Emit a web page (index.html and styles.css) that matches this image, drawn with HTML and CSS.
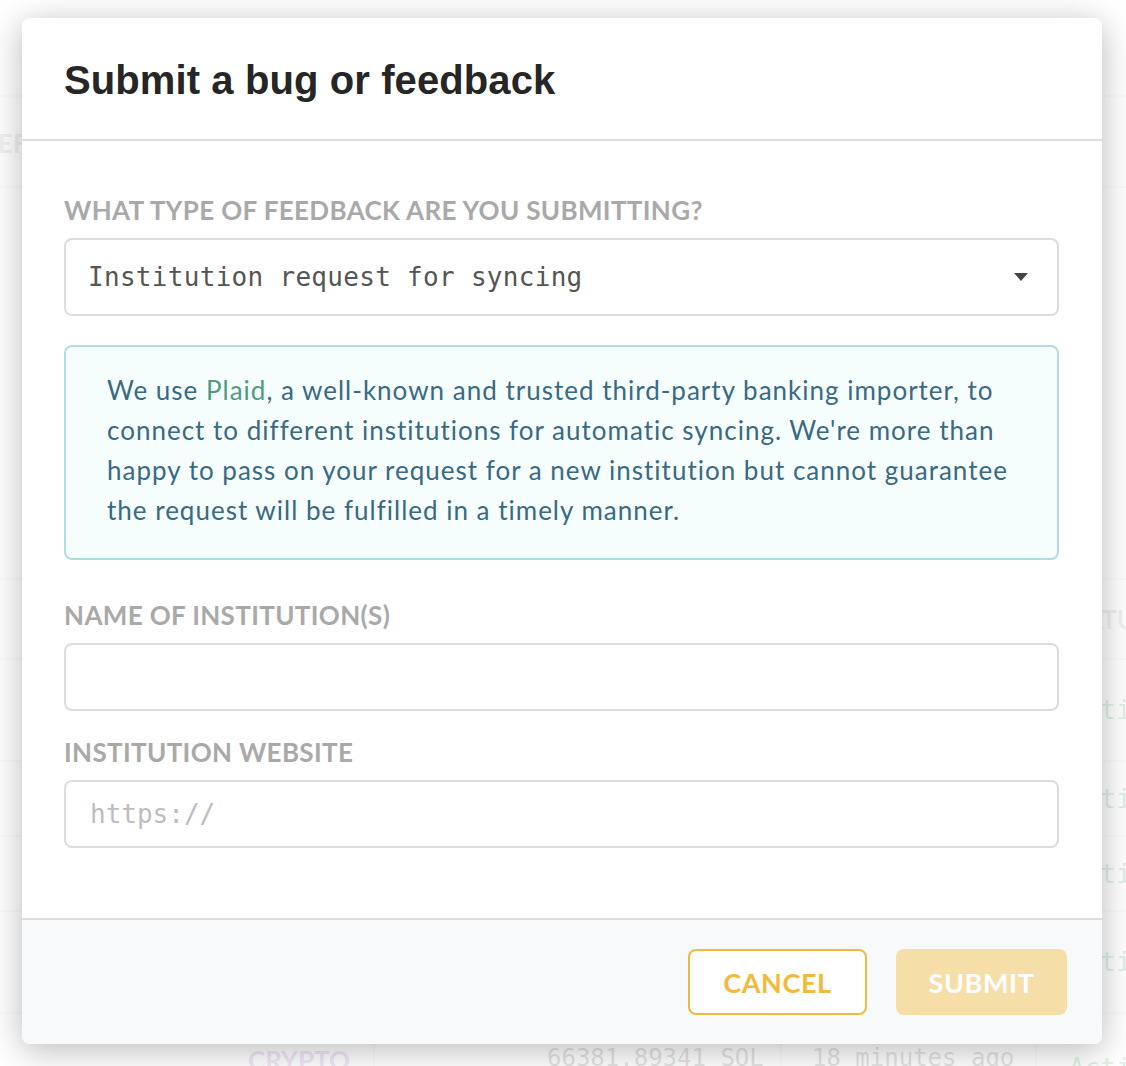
FILE: index.html
```html
<!DOCTYPE html>
<html lang="en">
<head>
<meta charset="utf-8">
<title>Submit a bug or feedback</title>
<link rel="stylesheet" href="styles.css">
</head>
<body>
<div class="page">
  <div class="bg-top">
    <div class="bg-row bg-head"><span class="bg-head-text">REF</span></div>
  </div>
  <div class="bg-table">
    <div class="bg-row bg-thead"><span class="c1"></span><span class="c2"></span><span class="c3"></span><span class="c4 bg-head-text status">STATUS</span></div>
    <div class="bg-row"><span class="c1"></span><span class="c2"></span><span class="c3"></span><span class="c4 active">Active</span></div>
    <div class="bg-row"><span class="c1"></span><span class="c2"></span><span class="c3"></span><span class="c4 active">Active</span></div>
    <div class="bg-row"><span class="c1"></span><span class="c2"></span><span class="c3"></span><span class="c4 active">Active</span></div>
    <div class="bg-row"><span class="c1"></span><span class="c2"></span><span class="c3"></span><span class="c4 active">Active</span></div>
    <div class="bg-row"><span class="c1 crypto">CRYPTO</span><span class="c2 mono">66381.89341 SOL</span><span class="c3 mono">18 minutes ago</span><span class="c4 active">Active</span></div>
  </div>
</div>
<div class="overlay"></div>
<div class="modal">
  <div class="modal-header">
    <h1 class="modal-title">Submit a bug or feedback</h1>
  </div>
  <div class="modal-body">
    <label class="field-label">What type of feedback are you submitting?</label>
    <div class="select">
      <span class="select-value">Institution request for syncing</span>
      <svg class="caret" width="14" height="8" viewBox="0 0 14 8"><path d="M0 0 H14 L7 8 Z" fill="#444"/></svg>
    </div>
    <div class="info">
      We use <span class="plaid">Plaid</span>, a well-known and trusted third-party banking importer, to connect to different institutions for automatic syncing. We're more than happy to pass on your request for a new institution but cannot guarantee the request will be fulfilled in a timely manner.
    </div>
    <label class="field-label label-gap">Name of institution(s)</label>
    <div class="input"></div>
    <label class="field-label label-gap2">Institution website</label>
    <div class="input"><span class="placeholder">https://</span></div>
  </div>
  <div class="modal-footer">
    <button class="btn btn-cancel">Cancel</button>
    <button class="btn btn-submit">Submit</button>
  </div>
</div>
</body>
</html>
```

FILE: styles.css
```css
* { box-sizing: border-box; }
html, body { margin: 0; padding: 0; }
body {
  width: 1126px;
  height: 1066px;
  overflow: hidden;
  background: #fff;
  font-family: "Lato", "Noto Sans", sans-serif;
  position: relative;
}
.page {
  display: flex;
  flex-direction: column;
}
.bg-top {
  padding-top: 95px;
  height: 578px;
}
.bg-row {
  display: flex;
  align-items: center;
  border-top: 2px solid #e6e6e6;
  height: 80px;
}
.bg-head {
  height: 93px;
  border-bottom: 2px solid #e6e6e6;
}
.bg-head-text {
  font-weight: 700;
  font-size: 26px;
  color: #aaa;
  margin-left: -19px;
}
.bg-table { display: flex; flex-direction: column; }
.bg-thead { height: 80px; }
.bg-row:nth-child(2) { height: 102px; }
.bg-row:nth-child(3) { height: 75px; }
.bg-row:nth-child(4) { height: 75px; }
.bg-row:nth-child(5) { height: 102px; }
.bg-row > span { flex-shrink: 0; }
.c1 { width: 373px; padding-left: 248px; display: block; }
.c2 { width: 407px; border-left: 2px solid #e6e6e6; padding-left: 172px; align-self: stretch; display: flex; align-items: center; }
.c3 { width: 255px; border-left: 2px solid #e6e6e6; padding-left: 30px; align-self: stretch; display: flex; align-items: center; }
.c4 { flex: 1; border-left: 2px solid #e6e6e6; padding-left: 32px; align-self: stretch; display: flex; align-items: center; }
.status { margin-left: 0; padding-left: 20px; }
.crypto { font-weight: 700; font-size: 26px; color: #a36bd0; }
.mono { font-family: "DejaVu Sans Mono", monospace; font-size: 24px; color: #555; }
.active { font-family: "DejaVu Sans Mono", monospace; font-size: 26px; color: #3aa35a; }
.bg-row:last-child { align-items: flex-start; padding-top: 30px; }
.bg-row:last-child .c2, .bg-row:last-child .c3 { align-items: flex-start; }

.overlay {
  position: absolute;
  inset: 0;
  background: rgba(255, 255, 255, 0.84);
}

.modal {
  position: absolute;
  left: 22px;
  top: 18px;
  width: 1080px;
  height: 1026px;
  background: #fff;
  border-radius: 8px;
  box-shadow: 0 6px 34px rgba(0, 0, 0, 0.28);
  display: flex;
  flex-direction: column;
  overflow: hidden;
}
.modal-header {
  padding: 38px 42px 35px;
  border-bottom: 2px solid #dedede;
}
.modal-title {
  margin: 0;
  font-family: "Liberation Sans", Arial, sans-serif;
  font-weight: 700;
  font-size: 40px;
  line-height: 48px;
  color: #262626;
  letter-spacing: 0.1px;
}
.modal-body {
  flex: 1;
  padding: 54px 43px 0 42px;
  display: flex;
  flex-direction: column;
}
.field-label {
  display: block;
  font-weight: 700;
  font-size: 26px;
  line-height: 30px;
  text-transform: uppercase;
  color: #a9a9a9;
  letter-spacing: 0.35px;
  margin-bottom: 13px;
}
.label-gap { margin-top: 40px; }
.label-gap2 { margin-top: 26px; }
.select {
  height: 78px;
  border: 2px solid #dcdcdc;
  border-radius: 8px;
  display: flex;
  align-items: center;
  justify-content: space-between;
  padding: 0 29px 0 22px;
}
.select-value {
  font-family: "DejaVu Sans Mono", monospace;
  font-size: 26px;
  color: #555;
  letter-spacing: 0.3px;
}
.caret { display: block; }
.info {
  margin-top: 29px;
  height: 215px;
  border: 2px solid #b5dbe2;
  border-radius: 8px;
  background: #f6fdfd;
  padding: 23px 26px 0 41px;
  font-size: 26px;
  line-height: 40px;
  letter-spacing: 1.0px;
  color: #386a84;
}
.plaid { color: #4f9a82; }
.input {
  height: 68px;
  border: 2px solid #dcdcdc;
  border-radius: 8px;
  display: flex;
  align-items: center;
  padding: 0 24px;
}
.placeholder {
  font-family: "DejaVu Sans Mono", monospace;
  font-size: 26px;
  color: #bdbdbd;
}
.modal-footer {
  height: 126px;
  border-top: 2px solid #dedede;
  background: #f8f9fa;
  display: flex;
  justify-content: flex-end;
  align-items: center;
  gap: 29px;
  padding: 0 35px 0 0;
}
.btn {
  height: 66px;
  border-radius: 8px;
  font-family: "Lato", sans-serif;
  font-weight: 700;
  font-size: 27px;
  letter-spacing: 0.6px;
  text-transform: uppercase;
  cursor: pointer;
}
.btn-cancel {
  width: 179px;
  background: #fff;
  border: 2px solid #f1ba3d;
  color: #f1ba3d;
}
.btn-submit {
  width: 171px;
  background: #f6dea8;
  border: none;
  color: #fff;
}
```
